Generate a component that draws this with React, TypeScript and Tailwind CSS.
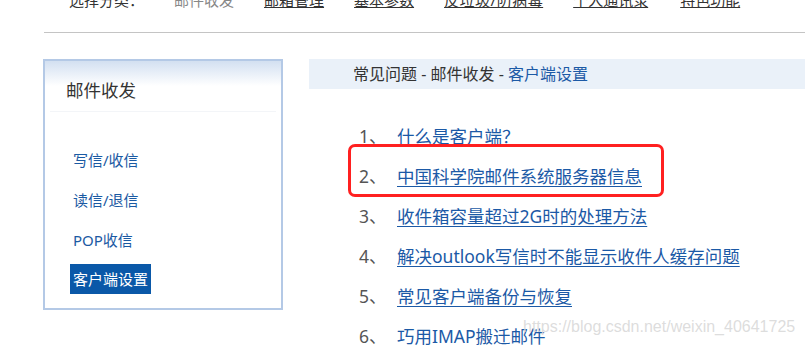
import React from "react";

const items = [
  "什么是客户端？",
  "中国科学院邮件系统服务器信息",
  "收件箱容量超过2G时的处理方法",
  "解决outlook写信时不能显示收件人缓存问题",
  "常见客户端备份与恢复",
  "巧用IMAP搬迁邮件",
];

export default function App() {
  return (
    <div className="relative w-[805px] h-[346px] overflow-hidden bg-white font-['Noto_Sans','Noto_Sans_CJK_SC',sans-serif]">
      {/* top nav (cut off) */}
      <div className="flex items-center gap-[30px] h-[20px] -mt-[10px] pl-[69px] text-[15px] leading-[20px] text-[#333]">
        <span>选择分类：</span>
        <span className="text-[#888]">邮件收发</span>
        <span className="underline">邮箱管理</span>
        <span className="underline">基本参数</span>
        <span className="underline tracking-[0.5px]">反垃圾/防病毒</span>
        <span className="underline">个人通讯录</span>
        <span className="underline ml-[2px]">特色功能</span>
      </div>
      <div className="mt-[22px] ml-[44px] h-px bg-[#c4c4c4]" />

      <div className="flex mt-[26px]">
        {/* sidebar */}
        <div className="ml-[43px] w-[240px] h-[251px] border-2 border-[#b4c9e6] flex flex-col">
          <div className="h-[50px] bg-gradient-to-b from-[#d3e0f1] via-white to-white">
            <div className="pl-[21px] pt-[17px] text-[17.5px] leading-[24px] text-[#333]">邮件收发</div>
          </div>
          <div className="mx-[5px] h-px bg-[#f3f5f8]" />
          <div className="mt-[28px] flex flex-col text-[15px] text-[#1b5aa3]">
            <div className="pl-[28px] h-[40px] leading-[40px]">写信/收信</div>
            <div className="pl-[28px] h-[40px] leading-[40px]">读信/退信</div>
            <div className="pl-[28px] h-[40px] leading-[40px]">POP收信</div>
            <div className="mt-[4px] ml-[25px] self-start px-[3px] h-[30px] leading-[30px] bg-[#0a58a8] text-white">客户端设置</div>
          </div>
        </div>

        {/* content */}
        <div className="ml-[26px] flex-1">
          <div className="h-[30px] bg-[#eaf1f9] pl-[44px] text-[16px] leading-[30px] text-[#333]">
            常见问题 - 邮件收发 - <span className="text-[#1c5aa6]">客户端设置</span>
          </div>
          <div className="mt-[27px] pl-[50px] flex flex-col text-[17.5px]">
            {items.map((t, i) => (
              <div key={i} className="flex h-[40px] leading-[40px]">
                <span className="w-[38px] text-[#555]">{i + 1}、</span>
                <span className="text-[#1b59a6] underline underline-offset-[3px]">{t}</span>
              </div>
            ))}
          </div>
        </div>
      </div>

      {/* annotation box */}
      <div className="absolute left-[348px] top-[144px] w-[316px] h-[53px] border-[3px] border-[#ff2020] rounded-[7px]" />

      {/* watermark */}
      <div className="absolute left-[523px] top-[316px] text-[16px] leading-[22px] text-[#d9d9d9]/90 font-['Liberation_Sans',sans-serif]">
        https://blog.csdn.net/weixin_40641725
      </div>
    </div>
  );
}
